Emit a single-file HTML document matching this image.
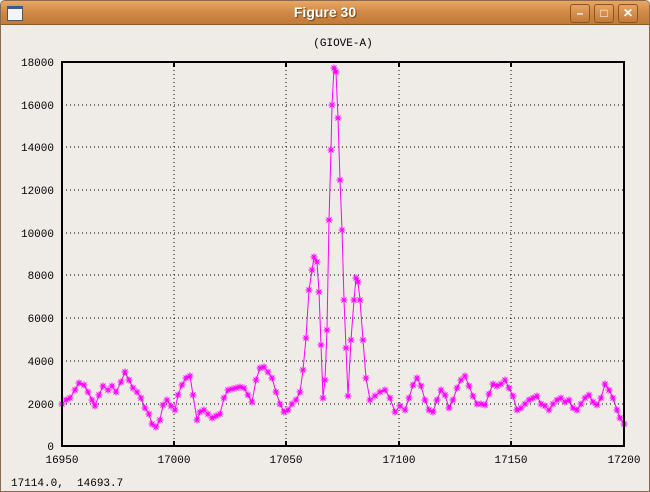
<!DOCTYPE html>
<html><head><style>
body{margin:0;width:650px;height:492px;overflow:hidden;background:#efebe7;font-family:"Liberation Sans",sans-serif}
.win{position:absolute;left:0;top:0;width:648px;height:490px;border:1px solid #8a6a4a;border-radius:5px 5px 0 0;background:#efebe7}
.tb{position:absolute;left:0;top:0;width:648px;height:23px;background:linear-gradient(#e8a866,#d08845 50%,#c27a38);border-bottom:1px solid #8e5a28;border-radius:4px 4px 0 0}
.tt{position:absolute;left:0;width:648px;top:3px;text-align:center;color:#fff;font-weight:bold;font-size:14px;text-shadow:1px 1px 1px #6a4018}
.ic{position:absolute;left:6px;top:5px;width:14px;height:11px;background:#f4f4f4;border:1px solid #555;border-top:3px solid #3a5a9a}
.bt{position:absolute;top:3px;width:18px;height:17px;border:1px solid #8a5526;border-radius:3px;background:linear-gradient(#e6a465,#c47a38);color:#fff;font-size:12px;font-weight:bold;text-align:center;line-height:17px}
</style></head><body>
<div class="win">
<div class="tb"><div class="ic"></div><div class="tt">Figure 30</div>
<div class="bt" style="left:569px">&#8211;</div><div class="bt" style="left:593px">&#9633;</div><div class="bt" style="left:617px">&#10005;</div></div>
</div>
<svg width="650" height="492" style="position:absolute;left:0;top:0" font-family="Liberation Mono,monospace" font-size="11">
<defs><marker id="m" markerWidth="9" markerHeight="9" refX="4.5" refY="4.5" viewBox="0 0 9 9" markerUnits="userSpaceOnUse" overflow="visible"><path d="M1,4.5H8M4.5,1V8M2,2L7,7M7,2L2,7" stroke="#ff00ff" stroke-width="1" fill="none"/></marker></defs>
<text x="343" y="46" text-anchor="middle">(GIOVE-A)</text>
<g stroke="#000" stroke-dasharray="1,3" stroke-width="1">
<path d="M174,62V446M286,62V446M399,62V446M511,62V446M62,404H624M62,361H624M62,318H624M62,275H624M62,233H624M62,190H624M62,147H624M62,105H624"/></g>
<g text-anchor="end">
<text x="54" y="450">0</text><text x="54" y="408">2000</text><text x="54" y="365">4000</text><text x="54" y="322">6000</text><text x="54" y="279">8000</text><text x="54" y="237">10000</text><text x="54" y="194">12000</text><text x="54" y="151">14000</text><text x="54" y="109">16000</text><text x="54" y="66">18000</text></g>
<g text-anchor="middle"><text x="62" y="463">16950</text><text x="174" y="463">17000</text><text x="286" y="463">17050</text><text x="399" y="463">17100</text><text x="511" y="463">17150</text><text x="624" y="463">17200</text></g>
<text x="11" y="486">17114.0,&#160;&#160;14693.7</text>
<polyline fill="none" stroke="#ff00ff" stroke-width="1" marker-start="url(#m)" marker-mid="url(#m)" marker-end="url(#m)" points="62,404 66,400 70,398 75,390 79,383 84,385 88,392 92,400 95,406 99,395 103,386 108,390 112,386 116,392 121,382 125,372 129,380 133,388 137,392 141,398 145,408 149,414 152,424 156,427 160,420 163,405 167,400 171,406 175,410 178,395 182,385 186,378 190,376 193,395 197,420 200,412 204,410 208,414 212,418 216,416 220,414 224,398 228,390 232,389 236,388 240,387 244,388 248,395 252,402 256,380 260,368 264,367 268,372 272,378 276,392 280,404 284,412 288,410 292,404 296,400 300,392 303,370 306,338 309,290 312,270 314,257 317,262 319,292 321,345 323,398 325,380 327,330 329,220 331,150 332,105 334,68 336,72 338,118 340,180 342,230 344,300 346,348 348,396 351,340 354,300 356,278 358,282 360,300 363,340 366,378 370,400 375,396 380,392 385,390 390,398 395,412 400,406 405,410 409,398 413,385 417,378 421,386 425,400 429,410 433,412 437,400 441,390 445,395 449,408 453,400 457,388 461,380 465,376 469,386 473,396 477,404 481,404 485,405 489,394 493,384 497,386 501,384 505,380 509,388 513,396 517,410 521,408 525,404 529,400 533,398 537,396 541,404 545,406 549,410 553,404 557,400 561,398 565,402 569,400 573,408 577,410 581,404 585,398 589,395 593,402 597,405 601,398 605,384 609,390 613,398 617,410 620,418 624,424"/>
<rect x="62" y="62" width="562" height="384" fill="none" stroke="#000" stroke-width="2"/>
<path d="M174,446v-5M286,446v-5M399,446v-5M511,446v-5M174,62v5M286,62v5M399,62v5M511,62v5" stroke="#000" stroke-width="2"/>
</svg>
</body></html>
